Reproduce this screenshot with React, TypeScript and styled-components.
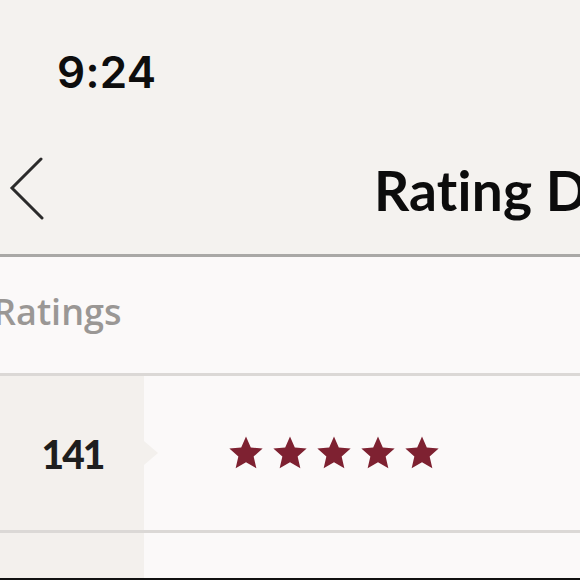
import React from "react";
import styled, { createGlobalStyle } from "styled-components";

const GlobalStyle = createGlobalStyle`
  html, body {
    margin: 0;
    padding: 0;
    background: #f4f2ef;
    overflow: hidden;
  }
  * { box-sizing: border-box; }
`;

const Screen = styled.div`
  width: 580px;
  height: 580px;
  display: flex;
  flex-direction: column;
  overflow: hidden;
  background: #fbf9f9;
  border-bottom: 2px solid #111;
`;

const Header = styled.header`
  height: 257px;
  flex: none;
  background: #f4f2ef;
  border-bottom: 3px solid #a9a8a6;
  display: flex;
  flex-direction: column;
`;

const StatusBar = styled.div`
  height: 130px;
  padding: 50px 0 0 57px;
`;

const Time = styled.span`
  font-family: Inter, "Noto Sans", sans-serif;
  font-weight: 600;
  font-size: 44px;
  line-height: 1;
  color: #0d0d0d;
  letter-spacing: 0.3px;
`;

const NavBar = styled.div`
  flex: 1;
  display: flex;
  align-items: center;
  padding-left: 9px;
`;

const BackButton = styled.button`
  width: 40px;
  height: 66px;
  margin-top: -6px;
  padding: 0;
  border: 0;
  background: transparent;
  display: flex;
  align-items: center;
  justify-content: flex-start;
`;

const Title = styled.h1`
  margin: 0 0 0 329px;
  white-space: nowrap;
  font-family: Lato, "Open Sans", sans-serif;
  font-weight: 700;
  font-size: 55px;
  line-height: 1;
  color: #0c0c0c;
  letter-spacing: 0.2px;
  padding-bottom: 4px;
`;

const SectionHeader = styled.div`
  height: 119px;
  flex: none;
  display: flex;
  align-items: center;
  border-bottom: 3px solid #dbd8d6;
  padding-bottom: 6px;
`;

const SectionTitle = styled.span`
  margin-left: -7px;
  font-family: "Open Sans", Lato, sans-serif;
  font-weight: 600;
  font-size: 36px;
  line-height: 1;
  color: #9a9795;
  letter-spacing: 0px;
`;

const Row = styled.div<{ $height: number }>`
  height: ${(p) => p.$height}px;
  flex: none;
  display: grid;
  grid-template-columns: 144px 1fr;
  border-bottom: 3px solid #dbd8d6;
`;

const CountCell = styled.div`
  position: relative;
  background: #f3f0ed;
  display: flex;
  align-items: center;
  justify-content: center;
  padding-left: 1px;
  padding-top: 3px;

  &::after {
    content: "";
    position: absolute;
    left: 100%;
    top: 50%;
    margin-top: -12px;
    border-top: 12px solid transparent;
    border-bottom: 12px solid transparent;
    border-left: 14px solid #f3f0ed;
  }
`;

const Count = styled.span`
  font-family: Lato, "Open Sans", sans-serif;
  font-weight: 900;
  font-size: 39px;
  line-height: 1;
  color: #1e1e1e;
  letter-spacing: -2px;
`;

const StarsCell = styled.div`
  display: flex;
  align-items: center;
  gap: 8px;
  padding-left: 84px;
`;

const StarIcon = styled.svg`
  width: 36px;
  height: 36px;
  flex: none;
  fill: #7e2131;
`;

const Star = () => (
  <StarIcon viewBox="0 0 24 24">
    <path d="M12 1l3.2 7.3 7.9.7-6 5.3 1.8 7.9-6.9-4.1-6.9 4.1 1.8-7.9-6-5.3 7.9-.7z" />
  </StarIcon>
);

const Chevron = () => (
  <svg width="36" height="64" viewBox="0 0 36 64">
    <polyline
      points="32,2 3,31 33,61"
      fill="none"
      stroke="#2b2b2b"
      strokeWidth="3"
      strokeLinecap="round"
      strokeLinejoin="miter"
    />
  </svg>
);

export default function App() {
  return (
    <>
      <GlobalStyle />
      <Screen>
        <Header>
          <StatusBar>
            <Time>9:24</Time>
          </StatusBar>
          <NavBar>
            <BackButton aria-label="Back">
              <Chevron />
            </BackButton>
            <Title>Rating Details</Title>
          </NavBar>
        </Header>
        <SectionHeader>
          <SectionTitle>Ratings</SectionTitle>
        </SectionHeader>
        <Row $height={157}>
          <CountCell>
            <Count>141</Count>
          </CountCell>
          <StarsCell>
            {[0, 1, 2, 3, 4].map((i) => (
              <Star key={i} />
            ))}
          </StarsCell>
        </Row>
        <Row $height={157}>
          <CountCell />
          <StarsCell />
        </Row>
      </Screen>
    </>
  );
}
